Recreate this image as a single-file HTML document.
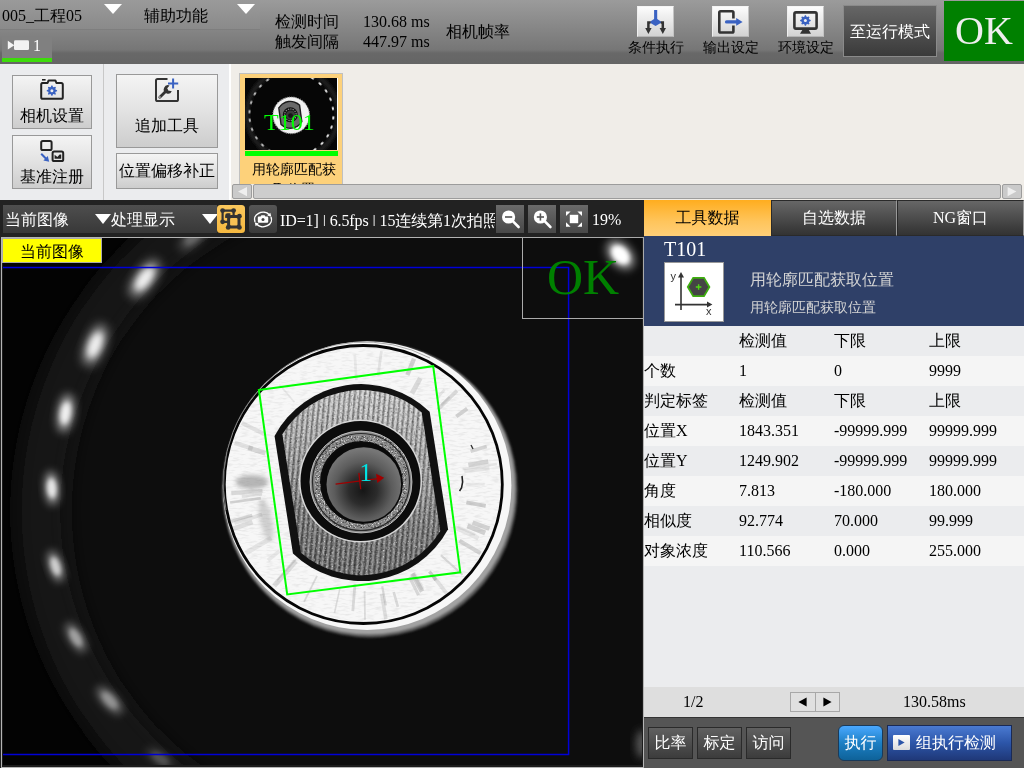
<!DOCTYPE html>
<html lang="zh-CN">
<head>
<meta charset="utf-8">
<title>005_工程05</title>
<style>
*{box-sizing:border-box;margin:0;padding:0}
html,body{width:1024px;height:768px;overflow:hidden;background:#222}
body{position:relative;font-family:"Liberation Serif","WenQuanYi Zen Hei","Noto Sans CJK SC",serif;font-size:16px;line-height:20px;color:#000}
.abs{position:absolute}
.t{position:absolute;white-space:nowrap;line-height:20px}
/* top bar */
#top{left:0;top:0;width:1024px;height:64px;background:linear-gradient(#9b9b9b 0,#767676 50px,#686868 53px,#656565 64px)}
#menu{left:0;top:0;width:260px;height:30px;background:linear-gradient(#9a9a9a,#8a8a8a);border-bottom:1px solid #7e7e7e}
.tri{position:absolute;width:0;height:0;border-left:9px solid transparent;border-right:9px solid transparent;border-top:10px solid #fff}
#camtab{left:2px;top:36px;width:50px;height:26px;background:#808080}
#camtab i{position:absolute;left:0;bottom:0;width:50px;height:4px;background:#3ddc0a}
.ibtn{position:absolute;width:36.5px;height:31px;background:linear-gradient(#fcfcfc,#e6e6e6 55%,#d2d2d2);border:1px solid;border-color:#f4f4f4 #c4c4c4 #b4b4b4 #eee}
#runmode{left:843px;top:5px;width:94px;height:52px;background:linear-gradient(#666,#3a3a3a);border:1px solid #8a8a8a;color:#fff;text-align:center;line-height:52px}
#okbig{left:944px;top:1px;width:80px;height:60px;background:#008000;color:#eee;font-size:40px;line-height:60px;text-align:center}
/* toolbar */
#tools{left:0;top:64px;width:1024px;height:136px;background:#ebecee}
#thumbs{left:231px;top:64px;width:793px;height:136px;background:#f0ede8}
.btn{position:absolute;background:linear-gradient(#f4f4f4,#e2e2e2 50%,#cdcdcd);border:1px solid #999;text-align:center}
/* viewer bar */
#vbar{left:0;top:200px;width:644px;height:37px;background:#222}
.dbtn{position:absolute;top:205px;width:28px;height:28px;background:linear-gradient(#6a6a6a,#484848)}
/* right panel */
#rp{left:644px;top:200px;width:380px;height:568px;background:#ebecee}
.tab{position:absolute;top:200px;height:36px;color:#fff;text-align:center;line-height:36px;background:linear-gradient(#676767,#3c3c3c 80%,#333)}
.tabi{border:1px solid #2a2a2a;border-right-color:#999;line-height:34px}
.row{position:absolute;left:644px;width:380px;height:30px}
.row span{position:absolute;top:5px;line-height:20px;white-space:nowrap}
.c0{left:0px}.c1{left:95px}.c2{left:190px}.c3{left:285px}
.bar{display:inline-block;height:11px;line-height:11.2px;overflow:hidden;vertical-align:baseline}
.bb{position:absolute;top:727px;width:45px;height:32px;background:linear-gradient(#606060,#3c3c3c);border:1px solid #2a2a2a;color:#fff;text-align:center;line-height:30px}
</style>
</head>
<body>
<div id="wrap" style="position:absolute;left:0;top:0;width:1024px;height:768px;will-change:transform">
<!-- TOP BAR -->
<div id="top" class="abs"></div>
<div id="menu" class="abs"></div>
<div class="t" style="left:2px;top:6px">005_工程05</div>
<div class="tri" style="left:104px;top:4px"></div>
<div class="t" style="left:144px;top:6px">辅助功能</div>
<div class="tri" style="left:237px;top:4px"></div>
<div id="camtab" class="abs"><i></i></div>
<div class="t" style="left:33px;top:36px;color:#fff">1</div>
<div class="t" style="left:275px;top:12px">检测时间</div>
<div class="t" style="left:363px;top:12px">130.68 ms</div>
<div class="t" style="left:275px;top:32px">触发间隔</div>
<div class="t" style="left:363px;top:32px">447.97 ms</div>
<div class="t" style="left:446px;top:22px">相机帧率</div>
<div class="ibtn" style="left:637px;top:6px"></div>
<div class="ibtn" style="left:712px;top:6px"></div>
<div class="ibtn" style="left:787px;top:6px"></div>
<div class="t" style="left:628px;top:38px;font-size:14px">条件执行</div>
<div class="t" style="left:703px;top:38px;font-size:14px">输出设定</div>
<div class="t" style="left:778px;top:38px;font-size:14px">环境设定</div>
<div id="runmode" class="abs">至运行模式</div>
<div id="okbig" class="abs">OK</div>

<!-- TOOLBAR -->
<div id="tools" class="abs"></div>
<div class="abs" style="left:103px;top:64px;width:1px;height:136px;background:#c8c8c8"></div>
<div class="abs" style="left:229px;top:64px;width:2px;height:136px;background:#fff"></div>
<div id="thumbs" class="abs"></div>
<div class="btn" style="left:12px;top:75px;width:80px;height:54px"><span class="t" style="left:7px;top:30px">相机设置</span></div>
<div class="btn" style="left:12px;top:135px;width:80px;height:54px"><span class="t" style="left:7px;top:31px">基准注册</span></div>
<div class="btn" style="left:116px;top:74px;width:102px;height:74px"><span class="t" style="left:18px;top:41px">追加工具</span></div>
<div class="btn" style="left:116px;top:153px;width:102px;height:36px"><span class="t" style="left:2px;top:7px">位置偏移补正</span></div>
<!-- thumbnail card -->
<div class="abs" style="left:239px;top:73px;width:104px;height:111px;background:#fdd17a;border:1px solid #c0c0c0;border-bottom:0"></div>
<svg class="abs" style="left:245px;top:78px" width="93" height="72" viewBox="245 78 93 72">
<defs><filter id="tb" x="-50%" y="-50%" width="200%" height="200%"><feGaussianBlur stdDeviation="0.5"/></filter><filter id="tb2" x="-50%" y="-50%" width="200%" height="200%"><feGaussianBlur stdDeviation="1.5"/></filter><clipPath id="tclip"><rect x="245" y="78" width="92" height="72"/></clipPath></defs>
<rect x="245" y="78" width="93" height="72" fill="#fff"/>
<g clip-path="url(#tclip)">
<rect x="245" y="78" width="92" height="72" fill="#060606"/>
<circle cx="292.6" cy="114.2" r="45.5" fill="none" stroke="#1c1c1c" stroke-width="5" filter="url(#tb2)"/>
<ellipse transform="translate(249.5,111.7) rotate(-86)" rx="1.9" ry="0.95" fill="#fff" opacity="0.75" filter="url(#tb)"/>
<ellipse transform="translate(251.2,102.5) rotate(-73)" rx="1.9" ry="0.95" fill="#fff" opacity="0.75" filter="url(#tb)"/>
<ellipse transform="translate(254.9,93.8) rotate(-60)" rx="1.9" ry="0.95" fill="#fff" opacity="0.75" filter="url(#tb)"/>
<ellipse transform="translate(260.5,86.2) rotate(-47)" rx="1.9" ry="0.95" fill="#fff" opacity="0.75" filter="url(#tb)"/>
<ellipse transform="translate(267.6,80.0) rotate(-34)" rx="1.9" ry="0.95" fill="#fff" opacity="0.75" filter="url(#tb)"/>
<ellipse transform="translate(275.9,75.5) rotate(-22)" rx="1.9" ry="0.95" fill="#fff" opacity="0.75" filter="url(#tb)"/>
<ellipse transform="translate(285.0,73.1) rotate(-9)" rx="1.9" ry="0.95" fill="#fff" opacity="0.75" filter="url(#tb)"/>
<ellipse transform="translate(294.5,72.7) rotate(4)" rx="1.9" ry="0.95" fill="#fff" opacity="0.95" filter="url(#tb)"/>
<ellipse transform="translate(303.7,74.5) rotate(17)" rx="1.9" ry="0.95" fill="#fff" opacity="0.95" filter="url(#tb)"/>
<ellipse transform="translate(312.4,78.2) rotate(30)" rx="1.9" ry="0.95" fill="#fff" opacity="0.95" filter="url(#tb)"/>
<ellipse transform="translate(320.0,83.8) rotate(43)" rx="1.9" ry="0.95" fill="#fff" opacity="0.95" filter="url(#tb)"/>
<ellipse transform="translate(326.1,91.0) rotate(56)" rx="1.9" ry="0.95" fill="#fff" opacity="0.95" filter="url(#tb)"/>
<ellipse transform="translate(330.5,99.3) rotate(69)" rx="1.9" ry="0.95" fill="#fff" opacity="0.95" filter="url(#tb)"/>
<ellipse transform="translate(332.9,108.5) rotate(82)" rx="1.9" ry="0.95" fill="#fff" opacity="0.95" filter="url(#tb)"/>
<ellipse transform="translate(333.3,117.9) rotate(94)" rx="1.9" ry="0.95" fill="#fff" opacity="0.95" filter="url(#tb)"/>
<ellipse transform="translate(331.5,127.2) rotate(107)" rx="1.9" ry="0.95" fill="#fff" opacity="0.95" filter="url(#tb)"/>
<ellipse transform="translate(327.7,135.8) rotate(120)" rx="1.9" ry="0.95" fill="#fff" opacity="0.95" filter="url(#tb)"/>
<ellipse transform="translate(322.0,143.4) rotate(133)" rx="1.9" ry="0.95" fill="#fff" opacity="0.95" filter="url(#tb)"/>
<ellipse transform="translate(314.8,149.5) rotate(146)" rx="1.9" ry="0.95" fill="#fff" opacity="0.95" filter="url(#tb)"/>
<ellipse transform="translate(306.5,153.8) rotate(159)" rx="1.9" ry="0.95" fill="#fff" opacity="0.95" filter="url(#tb)"/>
<ellipse transform="translate(297.3,156.2) rotate(172)" rx="1.9" ry="0.95" fill="#fff" opacity="0.95" filter="url(#tb)"/>
<ellipse transform="translate(287.9,156.5) rotate(185)" rx="1.9" ry="0.95" fill="#fff" opacity="0.75" filter="url(#tb)"/>
<ellipse transform="translate(278.6,154.6) rotate(198)" rx="1.9" ry="0.95" fill="#fff" opacity="0.75" filter="url(#tb)"/>
<ellipse transform="translate(270.0,150.8) rotate(211)" rx="1.9" ry="0.95" fill="#fff" opacity="0.75" filter="url(#tb)"/>
<ellipse transform="translate(262.5,145.1) rotate(224)" rx="1.9" ry="0.95" fill="#fff" opacity="0.75" filter="url(#tb)"/>
<ellipse transform="translate(256.4,137.8) rotate(236)" rx="1.9" ry="0.95" fill="#fff" opacity="0.75" filter="url(#tb)"/>
<ellipse transform="translate(252.1,129.4) rotate(249)" rx="1.9" ry="0.95" fill="#fff" opacity="0.75" filter="url(#tb)"/>
<ellipse transform="translate(249.8,120.3) rotate(262)" rx="1.9" ry="0.95" fill="#fff" opacity="0.75" filter="url(#tb)"/>
<circle cx="291.2" cy="115.3" r="18.3" fill="#f2f2f2"/>
<circle cx="291.2" cy="115.3" r="18.3" fill="none" stroke="#999" stroke-width="1.2" stroke-dasharray="1 1.2"/>
<g transform="translate(290.3,114.8) rotate(-7.8) scale(1.14)"><path d="M-9.8,-7.5 A12.3,12.3 0 0 1 9.8,-7.5 L9.8,7.5 A12.3,12.3 0 0 1 -9.8,7.5Z" fill="#1c1c1c"/><path d="M-8.6,-7 A11,11 0 0 1 8.6,-7 L8.6,7 A11,11 0 0 1 -8.6,7Z" fill="#6a6a6a"/></g>
<circle cx="290.3" cy="114.7" r="7.5" fill="#111"/><circle cx="290.4" cy="114.8" r="5.8" fill="none" stroke="#888" stroke-width="1.2" stroke-dasharray="1.4 1"/><circle cx="290.6" cy="115.1" r="4.6" fill="#3a3a3a"/><circle cx="290.5" cy="115.6" r="2.4" fill="#151515"/>
</g></svg>
<div class="abs" style="left:245px;top:151px;width:93px;height:5px;background:#00ff00"></div>
<div class="abs" style="left:244px;top:160px;width:100px;height:24px;overflow:hidden"><div class="t" style="left:0;width:100px;text-align:center;top:0;font-size:14px;line-height:20px;white-space:normal;padding:0 7px">用轮廓匹配获取位置</div></div>
<div class="t" style="left:264px;top:109px;font-size:24px;line-height:26px;color:#00ff00">T101</div>
<!-- scrollbar -->
<div class="abs" style="left:231px;top:184px;width:793px;height:16px;background:#f0ede8"></div>
<div class="abs" style="left:232px;top:184px;width:20px;height:15px;background:#cacaca;border:1px solid #9c9c9c;border-radius:2px"></div>
<div class="abs" style="left:253px;top:184px;width:748px;height:15px;background:#cdcdcd;border:1px solid #9c9c9c;border-radius:2px"></div>
<div class="abs" style="left:1002px;top:184px;width:20px;height:15px;background:#cacaca;border:1px solid #9c9c9c;border-radius:2px"></div>

<!-- VIEWER BAR -->
<div id="vbar" class="abs"></div>
<div class="abs" style="left:3px;top:205px;width:214px;height:28px;background:linear-gradient(#4e4e4e,#383838)"></div>
<div class="t" style="left:5px;top:210px;color:#fff">当前图像</div>
<div class="tri" style="left:95px;top:214px;border-left-width:8px;border-right-width:8px"></div>
<div class="t" style="left:111px;top:210px;color:#fff">处理显示</div>
<div class="tri" style="left:202px;top:214px;border-left-width:8px;border-right-width:8px"></div>
<div class="abs" style="left:217px;top:205px;width:28px;height:28px;background:linear-gradient(#fac75c,#f5b840);border-radius:3.5px"></div>
<div class="abs" style="left:249px;top:205px;width:28px;height:28px;background:linear-gradient(#565656,#3a3a3a);border-radius:3px"></div>
<div class="abs" style="left:279px;top:209px;width:216px;height:24px;overflow:hidden"><div class="t" style="left:1px;top:2px;color:#fff;letter-spacing:-0.1px">ID=1] <span class="bar">|</span> 6.5fps <span class="bar">|</span> 15连续第1次拍照</div></div>
<div class="dbtn" style="left:496px"></div>
<div class="dbtn" style="left:528px"></div>
<div class="dbtn" style="left:560px"></div>
<div class="t" style="left:592px;top:210px;color:#fff">19%</div>

<!-- IMAGE AREA -->
<div id="img" class="abs" style="left:1px;top:237px;width:643px;height:531px;background:#1c1c1c;border:1px solid #b4b4b4"></div>
<!--CAM-->
<svg id="cam" style="position:absolute;left:3px;top:238px" width="639" height="527" viewBox="3 238 639 527">
<defs>
<filter id="b1" x="-50%" y="-50%" width="200%" height="200%"><feGaussianBlur stdDeviation="1"/></filter>
<filter id="b2" x="-50%" y="-50%" width="200%" height="200%"><feGaussianBlur stdDeviation="2.2"/></filter>
<filter id="b4" x="-50%" y="-50%" width="200%" height="200%"><feGaussianBlur stdDeviation="4"/></filter>
<filter id="b10" x="-50%" y="-50%" width="200%" height="200%"><feGaussianBlur stdDeviation="9"/></filter>
<radialGradient id="hole" cx="0.49" cy="0.58" r="0.55"><stop offset="0" stop-color="#161616"/><stop offset="0.35" stop-color="#2c2c2c"/><stop offset="0.7" stop-color="#5c5c5c"/><stop offset="1" stop-color="#767676"/></radialGradient>
<linearGradient id="nutg" x1="0.6" y1="0" x2="0.35" y2="1"><stop offset="0" stop-color="#d2d2d2"/><stop offset="0.4" stop-color="#a8a8a8"/><stop offset="0.7" stop-color="#7c7c7c"/><stop offset="1" stop-color="#6c6c6c"/></linearGradient>
<pattern id="hatch" width="5" height="5" patternUnits="userSpaceOnUse" patternTransform="rotate(14)"><rect width="5" height="5" fill="none"/><rect x="0" width="1.6" height="5" fill="#000" opacity="0.38"/><rect x="2.6" width="1.2" height="5" fill="#fff" opacity="0.35"/></pattern>
<pattern id="ringp" width="4" height="4" patternUnits="userSpaceOnUse" patternTransform="rotate(40)"><rect width="4" height="4" fill="#8a8a8a"/><rect width="2" height="2" fill="#e8e8e8"/><rect x="2" y="2" width="2" height="2" fill="#4a4a4a"/></pattern>
<filter id="nz" x="0" y="0" width="100%" height="100%"><feTurbulence type="fractalNoise" baseFrequency="0.55 0.55" numOctaves="2" seed="4" result="n"/><feColorMatrix in="n" type="matrix" values="0 0 0 0 0  0 0 0 0 0  0 0 0 0 0  2.4 0 0 0 -1.15" result="a"/><feComposite in="a" in2="SourceGraphic" operator="in"/></filter>
<filter id="nzw" x="0" y="0" width="100%" height="100%"><feTurbulence type="fractalNoise" baseFrequency="0.7 0.7" numOctaves="2" seed="9" result="n"/><feColorMatrix in="n" type="matrix" values="0 0 0 0 1  0 0 0 0 1  0 0 0 0 1  3 0 0 0 -1.6" result="a"/><feComposite in="a" in2="SourceGraphic" operator="in"/></filter>
<filter id="nzr" x="0" y="0" width="100%" height="100%"><feTurbulence type="fractalNoise" baseFrequency="0.12 0.5" numOctaves="2" seed="2" result="n"/><feColorMatrix in="n" type="matrix" values="0 0 0 0 0.35  0 0 0 0 0.35  0 0 0 0 0.35  3.2 0 0 0 -1.5" result="a"/><feComposite in="a" in2="SourceGraphic" operator="in"/></filter>
<clipPath id="nutclip"><path id="nutpath" d="M-75,-60 A96,96 0 0 1 75,-60 L75,60 A96,96 0 0 1 -75,60 Z"/></clipPath>
<clipPath id="diskclip"><circle cx="367.1" cy="485.6" r="144.3"/></clipPath>
</defs>
<rect x="1" y="238" width="642" height="529" fill="#030303"/>
<g filter="url(#b10)"><circle cx="386.0" cy="511.0" r="333.0" fill="#0c0c0c"/><rect x="386" y="200" width="300" height="600" fill="#0c0c0c"/></g>
<path d="M326.1,850.8 A345.0,345.0 0 0 1 338.0,169.4" fill="none" stroke="#181818" stroke-width="50" filter="url(#b10)"/>
<g transform="translate(193.9,236.6) rotate(-43.0) scale(1.2)" opacity="0.35"><ellipse rx="16" ry="6.5" fill="#b0b0b0" filter="url(#b4)"/><ellipse rx="9.5" ry="4.2" fill="#fff" filter="url(#b2)"/></g>
<g transform="translate(144.6,278.7) rotate(-54.1) scale(1.35)" opacity="0.95"><ellipse rx="16" ry="6.5" fill="#b0b0b0" filter="url(#b4)"/><ellipse rx="9.5" ry="4.2" fill="#fff" filter="url(#b2)"/></g>
<g transform="translate(95.0,345.0) rotate(-68.3) scale(1.35)" opacity="0.95"><ellipse rx="16" ry="6.5" fill="#b0b0b0" filter="url(#b4)"/><ellipse rx="9.5" ry="4.2" fill="#fff" filter="url(#b2)"/></g>
<g transform="translate(65.6,413.1) rotate(-81.0) scale(1.2)" opacity="0.95"><ellipse rx="16" ry="6.5" fill="#b0b0b0" filter="url(#b4)"/><ellipse rx="9.5" ry="4.2" fill="#fff" filter="url(#b2)"/></g>
<g transform="translate(51.8,488.2) rotate(-94.1) scale(1.05)" opacity="0.9"><ellipse rx="16" ry="6.5" fill="#b0b0b0" filter="url(#b4)"/><ellipse rx="9.5" ry="4.2" fill="#fff" filter="url(#b2)"/></g>
<g transform="translate(55.6,566.3) rotate(252.5) scale(1.0)" opacity="0.8"><ellipse rx="16" ry="6.5" fill="#b0b0b0" filter="url(#b4)"/><ellipse rx="9.5" ry="4.2" fill="#fff" filter="url(#b2)"/></g>
<g transform="translate(75.8,637.6) rotate(239.8) scale(1.05)" opacity="0.6"><ellipse rx="16" ry="6.5" fill="#b0b0b0" filter="url(#b4)"/><ellipse rx="9.5" ry="4.2" fill="#fff" filter="url(#b2)"/></g>
<g transform="translate(109.6,700.3) rotate(227.6) scale(1.1)" opacity="0.55"><ellipse rx="16" ry="6.5" fill="#b0b0b0" filter="url(#b4)"/><ellipse rx="9.5" ry="4.2" fill="#fff" filter="url(#b2)"/></g>
<g transform="translate(160.1,758.4) rotate(214.4) scale(1.0)" opacity="0.25"><ellipse rx="16" ry="6.5" fill="#b0b0b0" filter="url(#b4)"/><ellipse rx="9.5" ry="4.2" fill="#fff" filter="url(#b2)"/></g>
<g transform="translate(620.5,254.8) rotate(48)"><ellipse rx="17" ry="11" fill="#999" filter="url(#b4)"/><ellipse rx="11" ry="7.5" fill="#fff" filter="url(#b2)"/></g>
<g transform="translate(642,744)"><ellipse rx="6" ry="14" fill="#5a5a5a" filter="url(#b4)"/></g>
<circle cx="370" cy="490" r="147.4" fill="#5a5a5a" filter="url(#b1)"/>
<circle cx="369.2" cy="488.6" r="146" fill="#a2a2a2" filter="url(#b1)"/>
<circle cx="367.1" cy="485.6" r="144.3" fill="#f7f7f7"/>
<g clip-path="url(#diskclip)">
<path d="M369,340 A147.6,147.6 0 0 1 369,635.2 A147.6,147.6 0 0 0 480,590 A139,139 0 0 0 369,340Z" fill="none"/>
<line x1="317.0" y1="575.9" x2="304.1" y2="601.8" stroke="#707070" stroke-width="1.8" opacity="0.22"/>
<line x1="295.9" y1="559.5" x2="277.2" y2="580.5" stroke="#707070" stroke-width="1.6" opacity="0.19"/>
<line x1="455.0" y1="527.2" x2="478.5" y2="538.2" stroke="#707070" stroke-width="4.4" opacity="0.12"/>
<line x1="381.6" y1="593.7" x2="385.9" y2="619.1" stroke="#707070" stroke-width="3.5" opacity="0.18"/>
<line x1="462.7" y1="469.0" x2="496.9" y2="463.9" stroke="#707070" stroke-width="2.5" opacity="0.13"/>
<line x1="440.9" y1="555.2" x2="462.5" y2="574.8" stroke="#707070" stroke-width="2.1" opacity="0.23"/>
<line x1="294.4" y1="402.3" x2="279.5" y2="384.5" stroke="#707070" stroke-width="1.7" opacity="0.11"/>
<line x1="393.7" y1="592.0" x2="397.9" y2="606.8" stroke="#707070" stroke-width="2.6" opacity="0.23"/>
<line x1="262.1" y1="514.6" x2="234.5" y2="522.9" stroke="#707070" stroke-width="3.9" opacity="0.15"/>
<line x1="265.3" y1="434.7" x2="241.8" y2="422.8" stroke="#707070" stroke-width="4.1" opacity="0.16"/>
<line x1="464.3" y1="471.3" x2="489.5" y2="468.2" stroke="#707070" stroke-width="4.1" opacity="0.13"/>
<line x1="262.5" y1="491.0" x2="231.3" y2="493.1" stroke="#707070" stroke-width="4.2" opacity="0.22"/>
<line x1="437.9" y1="409.5" x2="457.0" y2="390.6" stroke="#707070" stroke-width="3.6" opacity="0.23"/>
<line x1="252.2" y1="515.3" x2="231.1" y2="521.2" stroke="#707070" stroke-width="3.2" opacity="0.24"/>
<line x1="467.5" y1="525.9" x2="485.2" y2="533.0" stroke="#707070" stroke-width="5.0" opacity="0.28"/>
<line x1="339.9" y1="588.4" x2="334.5" y2="612.9" stroke="#707070" stroke-width="1.6" opacity="0.20"/>
<line x1="413.3" y1="572.9" x2="422.6" y2="589.4" stroke="#707070" stroke-width="4.2" opacity="0.12"/>
<line x1="364.6" y1="591.0" x2="365.0" y2="619.7" stroke="#707070" stroke-width="1.8" opacity="0.20"/>
<line x1="252.6" y1="448.6" x2="234.7" y2="442.8" stroke="#707070" stroke-width="4.5" opacity="0.16"/>
<line x1="271.3" y1="538.0" x2="245.9" y2="553.0" stroke="#707070" stroke-width="4.9" opacity="0.13"/>
<line x1="409.6" y1="577.2" x2="418.5" y2="595.1" stroke="#707070" stroke-width="3.2" opacity="0.23"/>
<line x1="355.0" y1="583.8" x2="352.8" y2="611.1" stroke="#707070" stroke-width="2.8" opacity="0.22"/>
<line x1="470.6" y1="451.3" x2="486.7" y2="446.5" stroke="#707070" stroke-width="3.7" opacity="0.25"/>
<line x1="472.6" y1="522.7" x2="489.4" y2="528.6" stroke="#707070" stroke-width="4.6" opacity="0.27"/>
<line x1="279.4" y1="551.1" x2="268.0" y2="560.3" stroke="#707070" stroke-width="3.7" opacity="0.11"/>
<line x1="457.6" y1="526.6" x2="475.1" y2="534.5" stroke="#707070" stroke-width="2.7" opacity="0.11"/>
<line x1="465.7" y1="484.2" x2="484.8" y2="484.2" stroke="#707070" stroke-width="2.8" opacity="0.10"/>
<line x1="441.2" y1="405.1" x2="449.4" y2="396.9" stroke="#707070" stroke-width="2.4" opacity="0.17"/>
<line x1="295.8" y1="561.0" x2="274.1" y2="585.9" stroke="#707070" stroke-width="5.0" opacity="0.20"/>
<line x1="262.0" y1="494.3" x2="241.8" y2="496.4" stroke="#707070" stroke-width="2.7" opacity="0.16"/>
<line x1="411.9" y1="393.5" x2="420.3" y2="378.1" stroke="#707070" stroke-width="4.8" opacity="0.21"/>
<line x1="429.4" y1="571.4" x2="435.9" y2="579.9" stroke="#707070" stroke-width="3.3" opacity="0.32"/>
<line x1="436.5" y1="398.8" x2="444.5" y2="389.6" stroke="#707070" stroke-width="2.8" opacity="0.13"/>
<line x1="378.1" y1="375.5" x2="381.4" y2="351.2" stroke="#707070" stroke-width="2.7" opacity="0.15"/>
<line x1="407.4" y1="375.0" x2="414.0" y2="358.6" stroke="#707070" stroke-width="4.3" opacity="0.28"/>
<line x1="356.4" y1="380.1" x2="354.8" y2="354.9" stroke="#707070" stroke-width="2.7" opacity="0.10"/>
<line x1="466.4" y1="502.3" x2="485.7" y2="505.8" stroke="#707070" stroke-width="3.9" opacity="0.31"/>
<line x1="252.5" y1="522.0" x2="232.7" y2="528.9" stroke="#707070" stroke-width="4.8" opacity="0.18"/>
<line x1="382.2" y1="586.3" x2="385.8" y2="605.4" stroke="#707070" stroke-width="2.2" opacity="0.24"/>
<line x1="456.3" y1="416.5" x2="467.2" y2="408.6" stroke="#707070" stroke-width="3.8" opacity="0.28"/>
<line x1="459.4" y1="540.8" x2="480.5" y2="553.3" stroke="#707070" stroke-width="4.2" opacity="0.26"/>
<line x1="260.8" y1="498.2" x2="230.1" y2="502.5" stroke="#707070" stroke-width="2.7" opacity="0.28"/>
<line x1="468.4" y1="465.0" x2="488.2" y2="461.5" stroke="#707070" stroke-width="4.8" opacity="0.26"/>
<line x1="412.3" y1="573.6" x2="422.1" y2="591.5" stroke="#707070" stroke-width="4.7" opacity="0.28"/>
<line x1="432.7" y1="575.3" x2="446.6" y2="593.4" stroke="#707070" stroke-width="3.8" opacity="0.17"/>
<line x1="265.4" y1="453.2" x2="248.3" y2="447.8" stroke="#707070" stroke-width="4.9" opacity="0.24"/>
<circle cx="363.3" cy="484.5" r="138" fill="#555" filter="url(#nzr)" opacity="0.16"/>
<ellipse cx="252" cy="482" rx="16" ry="7" fill="#666" opacity="0.45" filter="url(#b2)"/>
<ellipse cx="266" cy="520" rx="6" ry="22" fill="#777" opacity="0.3" filter="url(#b2)" transform="rotate(-12 266 520)"/>
<path d="M462,476 q1.5,6 -0.5,12 l-2,3" stroke="#222" stroke-width="1.6" fill="none"/>
<path d="M471,445 l2,4" stroke="#333" stroke-width="1.4" fill="none"/>
</g>
<circle cx="363.3" cy="484.5" r="139" fill="none" stroke="#050505" stroke-width="2.8"/>
<path d="M226,510 A141.2,141.2 0 0 1 430,358" fill="none" stroke="#9a9a9a" stroke-width="1" opacity="0.8"/>
<g transform="translate(361.3,482.6) rotate(-8.9)">
<path d="M-78.5,-59.5 A98.5,98.5 0 0 1 78.5,-59.5 L78.5,59.5 A98.5,98.5 0 0 1 -78.5,59.5 Z" fill="#111"/>
<path d="M-70.5,-60 A92.6,92.6 0 0 1 70.5,-60 L70.5,60 A92.6,92.6 0 0 1 -70.5,60 Z" fill="url(#nutg)"/>
<path d="M-70.5,-60 A92.6,92.6 0 0 1 70.5,-60 L70.5,60 A92.6,92.6 0 0 1 -70.5,60 Z" fill="url(#hatch)"/>
<path d="M-70.5,-60 A92.6,92.6 0 0 1 70.5,-60 L70.5,60 A92.6,92.6 0 0 1 -70.5,60 Z" fill="#000" filter="url(#nz)" opacity="0.5"/>
<path d="M-70.5,-60 A92.6,92.6 0 0 1 70.5,-60 L70.5,60 A92.6,92.6 0 0 1 -70.5,60 Z" fill="#fff" filter="url(#nzw)" opacity="0.7"/>
</g>
<circle cx="360.5" cy="481" r="61.5" fill="#d8d8d8"/>
<circle cx="360.5" cy="481" r="60" fill="#0c0c0c"/>
<circle cx="361" cy="482" r="46" fill="none" stroke="#8a8a8a" stroke-width="10"/>
<circle cx="361" cy="482" r="46" fill="none" stroke="#000" stroke-width="10" filter="url(#nz)" opacity="0.8"/>
<circle cx="361" cy="482" r="46" fill="none" stroke="#fff" stroke-width="10" filter="url(#nzw)"/>
<circle cx="361" cy="482" r="48.5" fill="none" stroke="#111" stroke-width="1.2" opacity="0.8"/>
<circle cx="361" cy="482" r="51" fill="none" stroke="#ddd" stroke-width="1" opacity="0.7"/>
<circle cx="362.5" cy="483.5" r="40.5" fill="#0a0a0a"/>
<circle cx="363.8" cy="484.5" r="37.3" fill="url(#hole)"/>
<polygon points="258.9,390 433.2,366.2 460.3,572.3 287.2,594.5" fill="none" stroke="#00ff00" stroke-width="2"/>
<g stroke="#a00000" stroke-width="1.3" fill="#a00000"><line x1="335.6" y1="484.2" x2="378" y2="478.6"/><line x1="358.9" y1="472.9" x2="360.7" y2="489.3"/><polygon points="384.2,477.8 376,473.8 377.3,483" stroke="none"/></g>
<text x="359.5" y="480.7" font-family="'Liberation Serif',serif" font-size="25" fill="#00e5e5">1</text>
</svg>
<!--/CAM-->
<svg class="abs" style="left:0;top:237px" width="644" height="531" viewBox="0 237 644 531"><path d="M3,267.6 H568.6 V754.4 H3" fill="none" stroke="#0000d8" stroke-width="1.5"/></svg>
<div class="abs" style="left:2px;top:238px;width:100px;height:25px;background:#ffff00;border:1px solid #aaa;text-align:center;line-height:25px">当前图像</div>
<div class="abs" style="left:522px;top:237px;width:122px;height:82px;border:1px solid #aaa"></div>
<div class="t" style="left:547px;top:249px;font-size:50px;line-height:56px;color:#008000">OK</div>

<!-- RIGHT PANEL -->
<div id="rp" class="abs"></div>
<div class="tab" style="left:644px;width:127px;color:#000;background:linear-gradient(#ffad1f,#ffc55c 60%,#ffcf78)">工具数据</div>
<div class="tab tabi" style="left:771px;width:126px">自选数据</div>
<div class="tab tabi" style="left:897px;width:127px">NG窗口</div>
<div class="abs" style="left:644px;top:236px;width:380px;height:90px;background:#2f4068"></div>
<div class="t" style="left:664px;top:239px;font-size:20px;color:#fff">T101</div>
<div class="abs" style="left:664px;top:262px;width:60px;height:60px;background:#fff;border:1px solid #999"></div>
<div class="t" style="left:750px;top:270px;color:#d4d4d4">用轮廓匹配获取位置</div>
<div class="t" style="left:750px;top:298px;color:#d4d4d4;font-size:14px">用轮廓匹配获取位置</div>

<div class="row" style="top:326px;background:#ebecee"><span class="c1">检测值</span><span class="c2">下限</span><span class="c3">上限</span></div>
<div class="row" style="top:356px;background:#f5f5f5"><span class="c0">个数</span><span class="c1">1</span><span class="c2">0</span><span class="c3">9999</span></div>
<div class="row" style="top:386px;background:#ebecee"><span class="c0">判定标签</span><span class="c1">检测值</span><span class="c2">下限</span><span class="c3">上限</span></div>
<div class="row" style="top:416px;background:#f5f5f5"><span class="c0">位置X</span><span class="c1">1843.351</span><span class="c2">-99999.999</span><span class="c3">99999.999</span></div>
<div class="row" style="top:446px;background:#ebecee"><span class="c0">位置Y</span><span class="c1">1249.902</span><span class="c2">-99999.999</span><span class="c3">99999.999</span></div>
<div class="row" style="top:476px;background:#f5f5f5"><span class="c0">角度</span><span class="c1">7.813</span><span class="c2">-180.000</span><span class="c3">180.000</span></div>
<div class="row" style="top:506px;background:#ebecee"><span class="c0">相似度</span><span class="c1">92.774</span><span class="c2">70.000</span><span class="c3">99.999</span></div>
<div class="row" style="top:536px;background:#f5f5f5"><span class="c0">对象浓度</span><span class="c1">110.566</span><span class="c2">0.000</span><span class="c3">255.000</span></div>

<div class="abs" style="left:644px;top:687px;width:380px;height:30px;background:#dedede"></div>
<div class="t" style="left:683px;top:692px">1/2</div>
<div class="abs" style="left:790px;top:692px;width:26px;height:20px;background:#e0e0e0;border:1px solid #a8a8a8"></div>
<div class="abs" style="left:815px;top:692px;width:25px;height:20px;background:#e0e0e0;border:1px solid #a8a8a8"></div>
<div class="t" style="left:903px;top:692px">130.58ms</div>

<div class="abs" style="left:644px;top:717px;width:380px;height:51px;background:#555;border-top:1px solid #333"></div>
<div class="bb" style="left:648px">比率</div>
<div class="bb" style="left:697px">标定</div>
<div class="bb" style="left:746px">访问</div>
<div class="abs" style="left:838px;top:725px;width:45px;height:36px;border-radius:6px;background:linear-gradient(#4aa8ff,#1c7fc4 50%,#0e6299);border:1px solid #1a3a5a;color:#fff;text-align:center;line-height:34px">执行</div>
<div class="abs" style="left:887px;top:725px;width:125px;height:36px;background:linear-gradient(#4a7ad2,#2c55a8 50%,#1f3878);border:1px solid #1a2a55;color:#fff;line-height:34px"><span class="t" style="left:28px;top:7px">组执行检测</span><span class="abs" style="left:5px;top:9px;width:17px;height:15px;background:linear-gradient(#fff,#dcdcdc);border-radius:1px"></span></div>
<!--ICONS-->
<svg class="abs" style="left:0;top:0" width="1024" height="64" viewBox="0 0 1024 64">
<g>
<polygon points="7.8,40.8 14.4,45.2 7.8,49.6" fill="#f4f4f4"/><rect x="14" y="40.3" width="15" height="9.8" rx="1.4" fill="#f2f2f2"/>
</g>
<g>
<rect x="654.1" y="10" width="3.1" height="10" fill="#3a62c2"/>
<polygon points="655.6,18 662,22.2 655.6,26 649.2,22.2" fill="#3a62c2"/>
<path d="M650.5,22.5 H648.4 V28.5 M660.7,22.5 H662.8 V28.5" fill="none" stroke="#333" stroke-width="2.5"/>
<polygon points="645.2,28 651.6,28 648.4,34" fill="#333"/>
<polygon points="659.6,28 666,28 662.8,34" fill="#333"/>
</g>
<g>
<path d="M733.4,18.6 V12.6 Q733.4,11.3 732.1,11.3 H720.6 Q719.3,11.3 719.3,12.6 V31.2 Q719.3,32.5 720.6,32.5 H732.1 Q733.4,32.5 733.4,31.2 V25.4" fill="none" stroke="#333" stroke-width="2.6"/>
<line x1="726.6" y1="21.9" x2="737" y2="21.9" stroke="#3a62c2" stroke-width="3.4" stroke-linecap="round"/>
<polygon points="736.2,18 742.6,21.9 736.2,25.8" fill="#3a62c2"/>
</g>
<g>
<rect x="794.4" y="12.4" width="22.2" height="16.2" rx="1.6" fill="none" stroke="#333" stroke-width="2.6"/>
<polygon points="802.6,29.6 808.6,29.6 811,33.8 800,33.8" fill="#333"/>
<polygon points="804.88,15.23 805.92,15.23 806.53,16.77 807.24,17.06 808.76,16.40 809.50,17.14 808.84,18.66 809.13,19.37 810.67,19.98 810.67,21.02 809.13,21.63 808.84,22.34 809.50,23.86 808.76,24.60 807.24,23.94 806.53,24.23 805.92,25.77 804.88,25.77 804.27,24.23 803.56,23.94 802.04,24.60 801.30,23.86 801.96,22.34 801.67,21.63 800.13,21.02 800.13,19.98 801.67,19.37 801.96,18.66 801.30,17.14 802.04,16.40 803.56,17.06 804.27,16.77" fill="#3a62c2"/><circle cx="805.4" cy="20.5" r="1.5" fill="#f0f0f0"/>
</g>
</svg>
<svg class="abs" style="left:0;top:64px" width="231" height="136" viewBox="0 64 231 136">
<g>
<path d="M42,83 H47.6 L48.6,80.4 H55.4 L56.4,83 H61.2 Q62.8,83 62.8,84.6 V97.2 Q62.8,98.8 61.2,98.8 H42.8 Q41.2,98.8 41.2,97.2 V84.6 Q41.2,83 42.8,83Z" fill="none" stroke="#222" stroke-width="2" stroke-linejoin="round"/>
<rect x="42" y="79" width="3.6" height="1.6" fill="#222"/>
<polygon points="51.39,85.53 52.41,85.53 53.00,87.06 53.69,87.35 55.20,86.68 55.92,87.40 55.25,88.91 55.54,89.60 57.07,90.19 57.07,91.21 55.54,91.80 55.25,92.49 55.92,94.00 55.20,94.72 53.69,94.05 53.00,94.34 52.41,95.87 51.39,95.87 50.80,94.34 50.11,94.05 48.60,94.72 47.88,94.00 48.55,92.49 48.26,91.80 46.73,91.21 46.73,90.19 48.26,89.60 48.55,88.91 47.88,87.40 48.60,86.68 50.11,87.35 50.80,87.06" fill="#3a62c2"/><circle cx="51.9" cy="90.7" r="1.5" fill="#eee"/>
</g>
<g>
<rect x="41.2" y="141" width="10.4" height="9" rx="1.6" fill="none" stroke="#222" stroke-width="2"/>
<rect x="52.6" y="151.6" width="10.6" height="9.4" rx="1.6" fill="none" stroke="#222" stroke-width="2"/>
<polygon points="54.6,158.8 54.6,154.8 57.4,157 59.6,154.6 61.2,154.6 61.2,158.8" fill="#222"/>
<line x1="41.2" y1="153.8" x2="46.6" y2="159.2" stroke="#3a62c2" stroke-width="2"/>
<polygon points="49.2,161.8 43.4,160.4 47.8,156" fill="#3a62c2"/>
</g>
<g>
<path d="M167.5,79 H157.6 Q156,79 156,80.6 V99.4 Q156,101 157.6,101 H176.4 Q178,101 178,99.4 V90" fill="none" stroke="#333" stroke-width="2"/>
<path d="M173.1,78.4 V88.6 M168,83.5 H178.2" stroke="#3a62c2" stroke-width="2" fill="none"/>
<line x1="159.8" y1="97.2" x2="166.6" y2="90.4" stroke="#333" stroke-width="2.8" stroke-linecap="round"/>
<path d="M169.6,85.6 A4.2,4.2 0 1 0 171.8,91.2 L168.2,90.6 L167.2,88.2 Z" fill="#333"/>
<circle cx="159.9" cy="97.1" r="0.8" fill="#ddd"/>
</g>
</svg>
<svg class="abs" style="left:0;top:200px" width="644" height="37" viewBox="0 200 644 37">
<g stroke="#333" fill="none">
<path d="M222.6,210.6 H233.6 V216 M222.6,210.6 V221.8 H228" stroke-width="2.2"/>
<path d="M226,218 V215.4 Q226,214 227.4,214 H230.4" stroke-width="1.6"/>
<rect x="228.6" y="216.6" width="10.4" height="10.4" rx="2.6" stroke-width="3" fill="#f8c254"/>
</g>
<g fill="#333">
<circle cx="222.6" cy="210.6" r="2.4"/><circle cx="233.6" cy="210.6" r="2.4"/><circle cx="222.6" cy="221.8" r="2.4"/>
<circle cx="228.2" cy="216.2" r="2.4"/><circle cx="239.4" cy="216.2" r="2.4"/><circle cx="228.2" cy="227.4" r="2.4"/><circle cx="239.4" cy="227.4" r="2.4"/>
</g>
<g><path d="M255.01,221.96 A8.5,7.2 0 0 1 269.32,214.68" fill="none" stroke="#fff" stroke-width="1.5"/><path d="M270.99,217.04 A8.5,7.2 0 0 1 256.68,224.32" fill="none" stroke="#fff" stroke-width="1.5"/><polygon points="271.28,216.79 270.35,212.70 267.29,215.52" fill="#fff"/><polygon points="254.72,222.21 255.65,226.30 258.71,223.48" fill="#fff"/><path d="M258.8,216.4 H260.6 L261.4,215.2 H264.6 L265.4,216.4 H267.2 Q268.2,216.4 268.2,217.4 V221.8 Q268.2,222.8 267.2,222.8 H258.8 Q257.8,222.8 257.8,221.8 V217.4 Q257.8,216.4 258.8,216.4Z" fill="#fff"/><circle cx="263" cy="219.6" r="1.5" fill="#444"/></g>
<line x1="512.8000000000001" y1="221.2" x2="518.6" y2="227" stroke="#fff" stroke-width="2.6" stroke-linecap="round"/><circle cx="508.6" cy="217" r="6.6" fill="#fff"/><line x1="505.0" y1="217" x2="512.2" y2="217" stroke="#555" stroke-width="1.6"/>
<line x1="544.6" y1="221.2" x2="550.4" y2="227" stroke="#fff" stroke-width="2.6" stroke-linecap="round"/><circle cx="540.4" cy="217" r="6.6" fill="#fff"/><line x1="536.8" y1="217" x2="544.0" y2="217" stroke="#555" stroke-width="1.6"/><line x1="540.4" y1="213.4" x2="540.4" y2="220.6" stroke="#555" stroke-width="1.6"/>
<rect x="569.8" y="214.8" width="8.4" height="8.4" fill="#fff"/>
<g fill="#fff">
<polygon points="566,211.4 570.6,211.4 566,216"/>
<polygon points="582,211.4 577.4,211.4 582,216"/>
<polygon points="566,226.8 570.6,226.8 566,222.2"/>
<polygon points="582,226.8 577.4,226.8 582,222.2"/>
</g>
</svg>
<svg class="abs" style="left:664px;top:262px" width="60" height="60" viewBox="664 262 60 60">
<path d="M681,274 V310 M675,304.6 H710" stroke="#333" stroke-width="1.6" fill="none"/>
<polygon points="681,272 684,277.4 678,277.4" fill="#333"/>
<polygon points="712.4,304.6 707,301.6 707,307.6" fill="#333"/>
<polygon points="687.8,287 693.2,277.8 704,277.8 709.4,287 704,296.2 693.2,296.2" fill="#444" stroke="#3fae10" stroke-width="1.8"/>
<path d="M698.6,284.2 V289.8 M695.8,287 H701.4" stroke="#4fd414" stroke-width="1.4"/>
<text x="670.4" y="280" font-family="'Liberation Sans',sans-serif" font-size="11" fill="#333">y</text>
<text x="706" y="315.4" font-family="'Liberation Sans',sans-serif" font-size="11" fill="#333">x</text>
</svg>
<svg class="abs" style="left:780px;top:687px" width="244" height="81" viewBox="780 687 244 81">
<polygon points="798.4,702 806.6,697.6 806.6,706.4" fill="#000"/>
<polygon points="831.6,702 823.4,697.6 823.4,706.4" fill="#000"/>
<polygon points="898.4,739 898.4,746 904.6,742.5" fill="#2c55a8"/>
</svg>
<svg class="abs" style="left:231px;top:184px" width="793" height="16" viewBox="231 184 793 16">
<polygon points="238,191.6 247,187 247,196.2" fill="#efefef"/>
<polygon points="1016.4,191.6 1007.6,187 1007.6,196.2" fill="#efefef"/>
</svg>
<!--/ICONS-->
</div>
</body>
</html>
